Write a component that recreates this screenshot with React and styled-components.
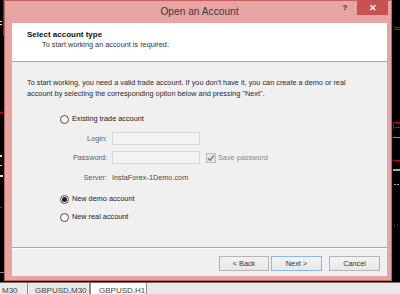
import React from "react";
import styled, { createGlobalStyle } from "styled-components";

const Global = createGlobalStyle`
  html, body { margin: 0; padding: 0; background: #000; }
  body { width: 400px; height: 294px; overflow: hidden; font-family: "Liberation Sans", Arial, sans-serif; }
`;

const Desktop = styled.div`
  width: 400px;
  height: 294px;
  display: grid;
  grid-template-rows: 283px 11px;
  background: #000;
  overflow: hidden;
`;

const ChartRow = styled.div`
  display: flex;
  align-items: flex-start;
  border-bottom: 1px solid #6f6f6f;
  box-sizing: border-box;
`;

const Strip = styled.svg`
  display: block;
  flex: none;
`;

const Window = styled.div`
  width: 388px;
  height: 281px;
  box-sizing: border-box;
  background: #e6a4a2;
  border: 1px solid #c8605e;
  display: flex;
  flex-direction: column;
  flex: none;
`;

const TitleBar = styled.div`
  height: 22px;
  display: grid;
  grid-template-columns: 1fr auto 1fr;
  align-items: start;
`;

const Title = styled.div`
  grid-column: 2;
  font-size: 10.2px;
  color: #3c3c3c;
  line-height: 22px;
  padding-left: 3px;
`;

const Controls = styled.div`
  grid-column: 3;
  justify-self: end;
  display: flex;
  align-items: flex-start;
  margin-top: -1px;
  margin-right: 3px;
`;

const HelpGlyph = styled.span`
  font-size: 8px;
  font-weight: bold;
  color: #333;
  width: 12px;
  line-height: 16px;
  margin-right: 6px;
  text-align: center;
`;

const CloseButton = styled.div`
  width: 31px;
  height: 15px;
  background: #c75250;
  color: #fff;
  font-size: 9px;
  font-weight: bold;
  display: flex;
  align-items: center;
  justify-content: center;
`;

const Client = styled.div`
  flex: 1;
  margin: 0 4px 4px 7px;
  background: #f0f0f0;
  display: flex;
  flex-direction: column;
  font-size: 7.3px;
  color: #2b2b2b;
`;

const Header = styled.div`
  height: 39px;
  box-sizing: border-box;
  background: #fff;
  border-bottom: 1px solid #a8a8a8;
  padding: 7px 0 0 15px;
`;

const HeaderTitle = styled.div`
  font-size: 8px;
  font-weight: bold;
  color: #111;
  line-height: 10px;
`;

const HeaderSub = styled.div`
  padding-left: 15px;
  line-height: 10px;
  color: #333;
`;

const Body = styled.div`
  flex: 1;
  padding: 16px 15px 0 15px;
`;

const Paragraph = styled.p`
  margin: 0;
  line-height: 10.5px;
  width: 335px;
`;

const Options = styled.div`
  margin-top: 15px;
  padding-left: 33px;
  display: flex;
  flex-direction: column;
`;

const RadioRow = styled.label`
  display: flex;
  align-items: center;
  gap: 3px;
  height: 10px;
  margin-top: ${(p) => p.$gap || 0}px;
  line-height: 10px;
  color: #222;
`;

const RadioCircle = styled.span`
  width: 9px;
  height: 9px;
  box-sizing: border-box;
  border-radius: 50%;
  border: 1px solid #4a4a4a;
  background: linear-gradient(#f4f4f4, #ffffff);
  display: flex;
  align-items: center;
  justify-content: center;
  &::after {
    content: "";
    width: 5px;
    height: 5px;
    border-radius: 50%;
    background: ${(p) => (p.$checked ? "#1a1a1a" : "transparent")};
  }
`;

const Form = styled.div`
  margin-top: 8px;
  display: grid;
  grid-template-columns: 47px 88px auto;
  column-gap: 5px;
  row-gap: 6px;
  align-items: center;
`;

const Label = styled.span`
  text-align: right;
  color: #5e5e5e;
  line-height: 13px;
`;

const Field = styled.div`
  height: 13px;
  box-sizing: border-box;
  background: #f3f3f3;
  border: 1px solid #d6d6d6;
`;

const CheckRow = styled.div`
  display: flex;
  align-items: center;
  gap: 2px;
  margin-left: 1px;
  color: #8a8a8a;
`;

const CheckBox = styled.span`
  width: 10px;
  height: 10px;
  box-sizing: border-box;
  border: 1px solid #bdbdbd;
  background: #e6e6e6;
  display: flex;
  align-items: center;
  justify-content: center;
`;

const ServerValue = styled.span`
  grid-column: 2 / 4;
  color: #4a4a4a;
  line-height: 13px;
  margin-top: 1px;
`;

const Footer = styled.div`
  height: 29px;
  box-sizing: border-box;
  border-top: 1px solid #a8a8a8;
  box-shadow: inset 0 1px 0 #fff;
  display: flex;
  justify-content: flex-end;
  align-items: flex-start;
  padding: 8px 7px 0 0;
`;

const Button = styled.div`
  width: ${(p) => p.$w}px;
  height: 15px;
  box-sizing: border-box;
  margin-left: ${(p) => p.$gap}px;
  border: 1px solid ${(p) => (p.$default ? "#86b9ea" : "#b4b4b4")};
  background: linear-gradient(#f3f3f3, #e7e7e7);
  display: flex;
  align-items: center;
  justify-content: center;
  color: #333;
  font-size: 7.3px;
`;

const TabBar = styled.div`
  background: #e9e9e9;
  display: flex;
  align-items: flex-start;
  font-size: 8px;
  color: #444;
  overflow: hidden;
`;

const Tab = styled.div`
  height: 11px;
  box-sizing: border-box;
  padding: 3px 0 0 ${(p) => p.$pad}px;
  width: ${(p) => p.$w}px;
  background: ${(p) => (p.$active ? "#fff" : "transparent")};
  border-right: 1px solid #8d8d8d;
  border-left: ${(p) => (p.$active ? "1px solid #8d8d8d" : "none")};
  white-space: nowrap;
  overflow: hidden;
  line-height: 9px;
`;

function LeftStrip() {
  return (
    <Strip width="4" height="283" viewBox="0 0 4 283">
      <rect x="3" y="0" width="1" height="36" fill="#d00" />
      <rect x="0" y="21" width="2" height="1" fill="#eee" />
      <rect x="0" y="24" width="2" height="1" fill="#eee" />
      <rect x="0" y="112" width="3" height="1" fill="#d00" />
      <rect x="0" y="155" width="2" height="2" fill="#ddd" />
      <rect x="0" y="165" width="2" height="1" fill="#ddd" />
      <rect x="0" y="175" width="3" height="2" fill="#ddd" />
      <rect x="0" y="207" width="2" height="1" fill="#d00" />
      <rect x="0" y="272" width="4" height="1" fill="#888" />
    </Strip>
  );
}

function RightStrip() {
  return (
    <Strip width="8" height="283" viewBox="0 0 8 283">
      <rect x="2" y="27" width="6" height="1" fill="#d00" />
      <rect x="2" y="29" width="6" height="1" fill="#d00" />
      <rect x="1" y="122" width="7" height="1" fill="#d00" />
      <rect x="1" y="122" width="1" height="7" fill="#d00" />
      <rect x="3" y="127" width="5" height="1" fill="#d00" />
      <rect x="1" y="137" width="7" height="1" fill="#1cc" />
      <rect x="1" y="160" width="7" height="1" fill="#d00" />
      <rect x="1" y="169" width="7" height="2" fill="#aaa" />
      <rect x="2" y="184" width="2" height="1" fill="#aaa" />
      <rect x="5" y="184" width="2" height="1" fill="#aaa" />
      <rect x="2" y="225" width="1" height="1" fill="#d00" />
      <rect x="5" y="224" width="1" height="1" fill="#d00" />
    </Strip>
  );
}

export default function App() {
  return (
    <>
      <Global />
      <Desktop>
        <ChartRow>
          <LeftStrip />
          <Window>
            <TitleBar>
              <Title>Open an Account</Title>
              <Controls>
                <HelpGlyph>?</HelpGlyph>
                <CloseButton>✕</CloseButton>
              </Controls>
            </TitleBar>
            <Client>
              <Header>
                <HeaderTitle>Select account type</HeaderTitle>
                <HeaderSub>To start working an account is required:</HeaderSub>
              </Header>
              <Body>
                <Paragraph>
                  To start working, you need a valid trade account. If you don't have it, you can create a demo or real
                  account by selecting the corresponding option below and pressing "Next".
                </Paragraph>
                <Options>
                  <RadioRow>
                    <RadioCircle />
                    Existing trade account
                  </RadioRow>
                  <Form>
                    <Label>Login:</Label>
                    <Field />
                    <span />
                    <Label>Password:</Label>
                    <Field />
                    <CheckRow>
                      <CheckBox>
                        <svg width="8" height="8" viewBox="0 0 8 8">
                          <path d="M1 4.2 L3 6.2 L7 1.5" fill="none" stroke="#7a7a7a" strokeWidth="1.3" />
                        </svg>
                      </CheckBox>
                      Save password
                    </CheckRow>
                    <Label>Server:</Label>
                    <ServerValue>InstaForex-1Demo.com</ServerValue>
                  </Form>
                  <RadioRow $gap={10}>
                    <RadioCircle $checked />
                    New demo account
                  </RadioRow>
                  <RadioRow $gap={8}>
                    <RadioCircle />
                    New real account
                  </RadioRow>
                </Options>
              </Body>
              <Footer>
                <Button $w={50} $gap={0}>&lt; Back</Button>
                <Button $w={51} $gap={2} $default>Next &gt;</Button>
                <Button $w={51} $gap={7}>Cancel</Button>
              </Footer>
            </Client>
          </Window>
          <RightStrip />
        </ChartRow>
        <TabBar>
          <Tab $w={28} $pad={2}>M30</Tab>
          <Tab $w={62} $pad={7}>GBPUSD,M30</Tab>
          <Tab $w={57} $pad={8} $active>GBPUSD,H1</Tab>
        </TabBar>
      </Desktop>
    </>
  );
}
